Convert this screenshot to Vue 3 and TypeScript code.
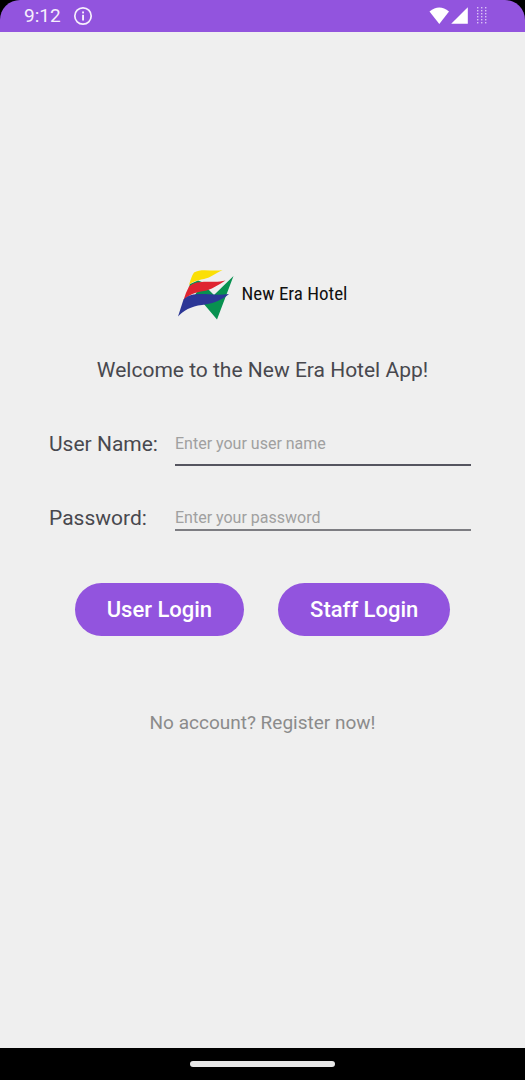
<script setup lang="ts">
import { ref } from 'vue'

const userName = ref('')
const password = ref('')
const dotColumns = [0, 4, 8]
const dotRows = [0, 3, 6, 9, 12, 15]
</script>

<template>
  <div class="screen">
    <header class="status">
      <div class="bar">
        <span class="time">9:12</span>
        <svg class="info" viewBox="0 0 20 20" aria-hidden="true">
          <circle cx="10" cy="10" r="8.2" fill="none" stroke="#f6effc" stroke-width="1.7" />
          <rect x="9.1" y="5.5" width="1.9" height="1.9" fill="#f6effc" />
          <rect x="9.1" y="8.8" width="1.9" height="5.7" fill="#f6effc" />
        </svg>
        <svg class="signals" viewBox="0 0 60 20" aria-hidden="true">
          <path d="M0.5 5.5 Q10.3 -2.5 20 5.5 L10.3 18 Z" fill="#fff" />
          <path d="M38.8 1.2 V17.8 H22.2 Z" fill="#fff" />
          <g fill="#d9c2f5">
            <template v-for="x in dotColumns" :key="x">
              <rect v-for="y in dotRows" :key="y" :x="48 + x" :y="1 + y" width="1.4" height="1.4" />
            </template>
          </g>
        </svg>
      </div>
    </header>

    <main class="content">
      <div class="brand">
        <svg class="mark" viewBox="0 0 56 52" aria-hidden="true">
          <path d="M55.5 8 L39 51.5 L25 35 L17 27 L20 22 L30 21 L36 27 Z" fill="#089150" />
          <path d="M12 16 L20 12.5 L24 14 L11 19 Z" fill="#089150" />
          <path d="M11 17 Q13.5 8 16 4.5 C23 0 36 4 44.5 2 C38 5 33 9.5 26 11 C18 12.5 14 14 11 17 Z" fill="#fbdf05" />
          <path d="M5.5 32 Q8 24 11 18.5 C20 10 36 16 47.5 12.5 C40 17 33 22 26 23 C17 24 11 27 5.5 32 Z" fill="#df2430" />
          <path d="M0 48.5 L5.5 31.5 C16 21.5 32 29 51 26 C43 33 33 36 24 37 C13 38 5 43 0 48.5 Z" fill="#2c3796" />
        </svg>
        <span class="name">New Era Hotel</span>
      </div>

      <h1 class="welcome">Welcome to the New Era Hotel App!</h1>

      <form class="login" @submit.prevent>
        <div class="fields">
          <label for="user-name">User Name:</label>
          <input id="user-name" v-model="userName" class="focused" type="text" placeholder="Enter your user name" />
          <label for="password">Password:</label>
          <input id="password" v-model="password" type="password" placeholder="Enter your password" />
        </div>
        <div class="actions">
          <button type="submit">User Login</button>
          <button type="button">Staff Login</button>
        </div>
      </form>

      <a class="register" href="#register">No account? Register now!</a>
    </main>

    <footer class="nav"><span class="handle"></span></footer>
  </div>
</template>

<style>
body {
  margin: 0;
  background: #000;
}
</style>

<style scoped>
.screen {
  min-height: 100vh;
  display: flex;
  flex-direction: column;
  background: #efefef;
  color: #48484e;
  font-family: Roboto, "Liberation Sans", sans-serif;
}
.status {
  background: #000;
}
.bar {
  display: flex;
  align-items: center;
  height: 32px;
  box-sizing: border-box;
  padding: 0 36px 0 24px;
  border-radius: 20px 20px 0 0;
  background: #9254de;
  color: #f6effc;
}
.time {
  font-size: 19px;
  line-height: 32px;
}
.info {
  width: 20px;
  height: 20px;
  margin-left: 12px;
}
.signals {
  width: 60px;
  height: 20px;
  margin-left: auto;
}
.content {
  flex: 1;
  display: flex;
  flex-direction: column;
  align-items: center;
  padding: 236px 0 40px;
}
.brand {
  display: flex;
  align-items: center;
  gap: 8px;
}
.mark {
  width: 56px;
  height: 52px;
}
.name {
  color: #111;
  font-family: "Liberation Sans Narrow", "Roboto Condensed", "Liberation Sans", sans-serif;
  font-size: 19px;
  line-height: 24px;
}
.welcome {
  margin: 36px 0 0;
  font-size: 21px;
  font-weight: 400;
  line-height: 28px;
}
.login {
  align-self: stretch;
  margin-top: 47px;
}
.fields {
  display: grid;
  grid-template-columns: 126px 1fr;
  align-items: start;
  row-gap: 39px;
  padding: 0 54px 0 49px;
}
label {
  font-size: 21px;
  line-height: 26px;
}
input {
  box-sizing: border-box;
  width: 100%;
  min-width: 0;
  height: 26px;
  padding: 0;
  border: 0;
  border-bottom: 2px solid #7d7d82;
  border-radius: 0;
  outline: 0;
  background: transparent;
  color: #48484e;
  font-family: inherit;
  font-size: 16px;
}
input.focused {
  height: 35px;
  padding-bottom: 9px;
  border-bottom-color: #55555f;
}
input::placeholder {
  color: #a0a0a0;
  opacity: 1;
}
.actions {
  display: flex;
  justify-content: center;
  gap: 34px;
  margin-top: 52px;
}
button {
  height: 53px;
  padding: 0 32px;
  border: 0;
  border-radius: 27px;
  background: #9254de;
  color: #fff;
  font-family: inherit;
  font-size: 22px;
  font-weight: 500;
}
.register {
  margin-top: 73px;
  color: #8b8b8b;
  font-size: 19px;
  line-height: 28px;
  text-decoration: none;
}
.nav {
  display: flex;
  align-items: center;
  justify-content: center;
  height: 32px;
  background: #000;
}
.handle {
  width: 145px;
  height: 6px;
  border-radius: 3px;
  background: #e8e8e8;
}
</style>
